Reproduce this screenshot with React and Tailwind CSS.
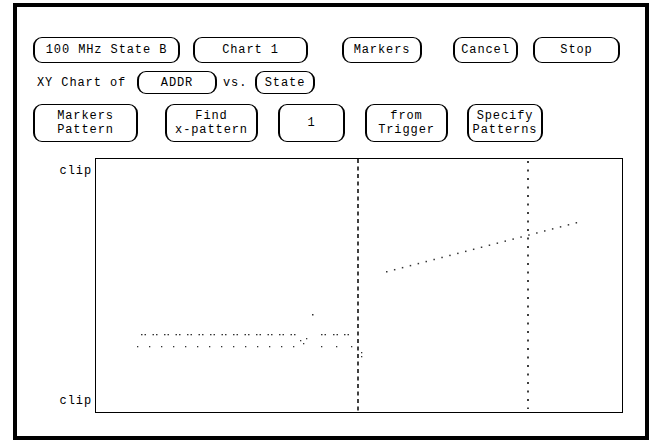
import React from 'react'

// HP-style softkey: rounded box, heavier side strokes
function Key({ w, h, className = '', children }) {
  return (
    <div
      className={`flex shrink-0 flex-col items-center justify-center rounded-[9px] border-x-2 border-y-[1.5px] border-black text-center leading-[14px] ${className}`}
      style={{ width: w, height: h }}
    >
      {children}
    </div>
  )
}

function Chart() {
  const rise = []
  for (let i = 0; i < 25; i++) {
    const x = 290 + i * 7.9
    const y = 112 - i * 2.04
    rise.push(<rect key={i} x={x} y={y} width="1.5" height="1.5" />)
  }
  const row1 = []
  for (let x = 45; x <= 200; x += 11.5) {
    row1.push(<rect key={'a' + x} x={x} y={175} width="1.5" height="1.3" />)
    row1.push(<rect key={'b' + x} x={x + 3.5} y={175} width="1.5" height="1.3" />)
  }
  ;[225, 228.5, 237, 240.5, 248, 251.5].forEach((x) =>
    row1.push(<rect key={'c' + x} x={x} y={175} width="1.5" height="1.3" />),
  )
  const row2 = []
  for (let x = 41; x <= 205; x += 12) {
    row2.push(<rect key={'d' + x} x={x} y={187} width="1.3" height="1.3" />)
  }
  ;[225, 240, 255].forEach((x) =>
    row2.push(<rect key={'e' + x} x={x} y={187} width="1.3" height="1.3" />),
  )

  return (
    <svg width="526" height="253" viewBox="0 0 526 253" className="block">
      <g fill="#333">
        {rise}
        {row1}
        {row2}
        <rect x="216" y="155" width="1.5" height="1.5" />
        <rect x="204" y="181" width="1.3" height="1.3" />
        <rect x="207" y="184" width="1.3" height="1.3" />
        <rect x="210" y="179" width="1.3" height="1.3" />
        <rect x="265" y="193" width="1.3" height="1.3" />
        <rect x="265" y="197" width="1.3" height="1.3" />
      </g>
      <line x1="262" y1="0" x2="262" y2="253" stroke="#111" strokeWidth="1.6" strokeDasharray="4 3.5" />
      <line x1="432" y1="2" x2="432" y2="250" stroke="#111" strokeWidth="1.6" strokeDasharray="2 6.5" />
    </svg>
  )
}

export default function App() {
  return (
    <div className="h-[440px] w-[651px] overflow-hidden bg-white text-[12px] tracking-[0.9px] text-black [font-family:'Liberation_Mono',monospace]">
      <div className="ml-[13px] mt-[3px] h-[437px] w-[636px] border-4 border-black pl-[16px] pt-[30px]">
        {/* top softkeys */}
        <div className="flex items-center">
          <Key w={147} h={26}>100 MHz State B</Key>
          <Key w={115} h={26} className="ml-[13px]">Chart 1</Key>
          <Key w={80} h={26} className="ml-[34px]">Markers</Key>
          <Key w={65} h={26} className="ml-[31px]">Cancel</Key>
          <Key w={87} h={26} className="ml-[15px]">Stop</Key>
        </div>

        {/* XY chart selection */}
        <div className="mt-[8px] flex items-center">
          <span className="ml-[4px] w-[100px]">XY Chart of</span>
          <Key w={80} h={23}>ADDR</Key>
          <span className="ml-[6px] w-[32px]">vs.</span>
          <Key w={60} h={23}>State</Key>
        </div>

        {/* marker softkeys */}
        <div className="mt-[10px] flex items-center">
          <Key w={105} h={38}>
            <span>Markers</span>
            <span>Pattern</span>
          </Key>
          <Key w={93} h={38} className="ml-[27px]">
            <span>Find</span>
            <span>x-pattern</span>
          </Key>
          <Key w={67} h={38} className="ml-[20px]">1</Key>
          <Key w={83} h={38} className="ml-[20px]">
            <span>from</span>
            <span>Trigger</span>
          </Key>
          <Key w={76} h={38} className="ml-[19px]">
            <span>Specify</span>
            <span>Patterns</span>
          </Key>
        </div>

        {/* chart */}
        <div className="mt-[16px] flex">
          <div className="flex w-[62px] flex-col justify-between pb-[3px] pr-[3px] pt-[4px] text-right">
            <span>clip</span>
            <span>clip</span>
          </div>
          <div className="border-[1.5px] border-black">
            <Chart />
          </div>
        </div>
      </div>
    </div>
  )
}
